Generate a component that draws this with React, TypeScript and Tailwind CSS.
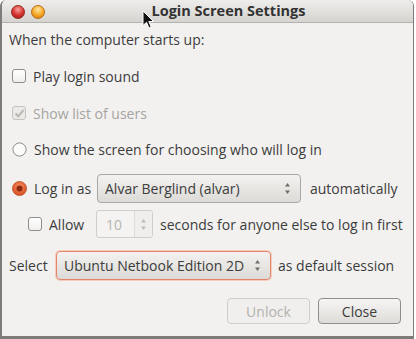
import React from "react";

const font = { fontFamily: '"Open Sans", "DejaVu Sans", sans-serif' };

const Checkbox = ({ checked, disabled }: { checked?: boolean; disabled?: boolean }) => (
  <div
    className={`w-[14px] h-[14px] rounded-[3px] border flex items-center justify-center shrink-0 ${
      disabled ? "border-[#c4c3bf] bg-[#eceae7]" : "border-[#8e8d89] bg-gradient-to-b from-white to-[#f0efed]"
    }`}
  >
    {checked && (
      <svg width="11" height="11" viewBox="0 0 11 11">
        <path d="M1.5 5.5 L4.3 8.3 L9.5 2" fill="none" stroke={disabled ? "#b9b8b4" : "#3c3c3c"} strokeWidth="2" />
      </svg>
    )}
  </div>
);

const Radio = ({ checked }: { checked?: boolean }) =>
  checked ? (
    <svg width="15" height="15" viewBox="0 0 15 15" className="shrink-0">
      <defs>
        <radialGradient id="rg" cx="50%" cy="35%" r="65%">
          <stop offset="0%" stopColor="#f58a5c" />
          <stop offset="100%" stopColor="#d84f22" />
        </radialGradient>
      </defs>
      <circle cx="7.5" cy="7.5" r="7" fill="url(#rg)" stroke="#b9471f" strokeWidth="0.8" />
      <circle cx="7.5" cy="7.5" r="3" fill="#8a2a12" />
    </svg>
  ) : (
    <svg width="15" height="15" viewBox="0 0 15 15" className="shrink-0">
      <circle cx="7.5" cy="7.5" r="6.6" fill="#fbfbfa" stroke="#8e8d89" strokeWidth="1" />
    </svg>
  );

const Arrows = ({ color = "#6e6d69" }: { color?: string }) => (
  <svg width="7" height="13" viewBox="0 0 7 13">
    <path d="M3.5 1 L6 4.5 L1 4.5 Z" fill={color} />
    <path d="M3.5 12 L6 8.5 L1 8.5 Z" fill={color} />
  </svg>
);

const Combo = ({ label, width, focus }: { label: string; width: string; focus?: boolean }) => (
  <div
    className={`${width} h-[29px] shrink-0 rounded-[4px] border flex items-center justify-between pl-[7px] pr-[9px] bg-gradient-to-b from-[#f3f2f0] to-[#dcdbd7] text-[#3c3c3c] ${
      focus ? "border-[#e2866a] shadow-[0_0_0_1px_#f5cdbf]" : "border-[#a9a8a4]"
    }`}
  >
    <span>{label}</span>
    <Arrows />
  </div>
);

export default function App() {
  return (
    <div className="w-[416px] h-[339px] bg-white relative overflow-hidden" style={font}>
      <div className="w-[414px] h-[339px] flex flex-col rounded-t-[6px] border-l-2 border-b-[3px] border-r border-[#7c7c7a] bg-[#f2f1f0] overflow-hidden text-[14px] text-[#3c3c3c] whitespace-nowrap">
        <div className="h-[23px] shrink-0 flex items-center relative bg-gradient-to-b from-[#eeedeb] to-[#d5d4d0] border-b border-[#b3b2ae]">
          <div className="flex gap-[6px] pl-[9px] pt-[1px]">
            <div className="w-[14px] h-[14px] rounded-full bg-[radial-gradient(circle_at_50%_30%,#f9a09a,#d3302c_55%,#8f1a17)] border border-[#9a2a25]" />
            <div className="w-[14px] h-[14px] rounded-full bg-[radial-gradient(circle_at_50%_30%,#fde6a0,#f5a623_55%,#c9720f)] border border-[#b77018]" />
          </div>
          <div className="absolute left-0 right-0 text-center pl-[42px] font-bold text-[14.5px] text-[#333333]">
            Login Screen Settings
          </div>
        </div>

        <div className="flex flex-col pl-[7px] pr-[10px]">
          <div className="h-[32px] flex items-center">When the computer starts up:</div>

          <div className="h-[42px] flex items-center gap-[7px] pl-[3px]">
            <Checkbox />
            <span>Play login sound</span>
          </div>

          <div className="h-[32px] flex items-center gap-[7px] pl-[3px] text-[#a5a4a0]">
            <Checkbox checked disabled />
            <span>Show list of users</span>
          </div>

          <div className="h-[40px] flex items-center gap-[7px] pl-[3px]">
            <Radio />
            <span>Show the screen for choosing who will log in</span>
          </div>

          <div className="h-[38px] flex items-center pl-[3px]">
            <Radio checked />
            <span className="ml-[7px] w-[63px] shrink-0">Log in as</span>
            <Combo label="Alvar Berglind (alvar)" width="w-[204px]" />
            <span className="ml-[9px]">automatically</span>
          </div>

          <div className="h-[34px] flex items-center pl-[19px]">
            <Checkbox />
            <span className="ml-[7px] w-[47px] shrink-0">Allow</span>
            <div className="flex h-[28px] w-[57px] shrink-0 rounded-[3px] border border-[#cfcecb] bg-[#f4f3f2] overflow-hidden">
              <div className="flex-1 flex items-center pl-[9px] text-[#b6b5b1]">10</div>
              <div className="w-[18px] border-l border-[#dddcd9] flex items-center justify-center bg-[#efeeec]">
                <Arrows color="#bdbcb8" />
              </div>
            </div>
            <span className="ml-[7px]">seconds for anyone else to log in first</span>
          </div>

          <div className="h-[48px] flex items-center">
            <span className="w-[47px] shrink-0">Select</span>
            <Combo label="Ubuntu Netbook Edition 2D" width="w-[215px]" focus />
            <span className="ml-[7px]">as default session</span>
          </div>

          <div className="h-[35px] flex items-end justify-end gap-[8px] pr-[2px]">
            <div className="w-[83px] h-[26px] rounded-[4px] border border-[#cfcecb] bg-[#f0efed] flex items-center justify-center text-[#b3b2ae]">
              Unlock
            </div>
            <div className="w-[83px] h-[26px] rounded-[4px] border border-[#8f8e8a] bg-gradient-to-b from-[#f6f5f4] to-[#dedcd8] flex items-center justify-center">
              Close
            </div>
          </div>
        </div>
      </div>

      <svg className="absolute left-[142px] top-[10px]" width="13" height="20" viewBox="0 0 13 20">
        <path d="M1 1 L1 15.5 L4.5 12.3 L7 18 L9.2 17 L6.8 11.5 L11.5 11.5 Z" fill="#111" stroke="#fff" strokeWidth="1" strokeLinejoin="round" />
      </svg>
    </div>
  );
}
